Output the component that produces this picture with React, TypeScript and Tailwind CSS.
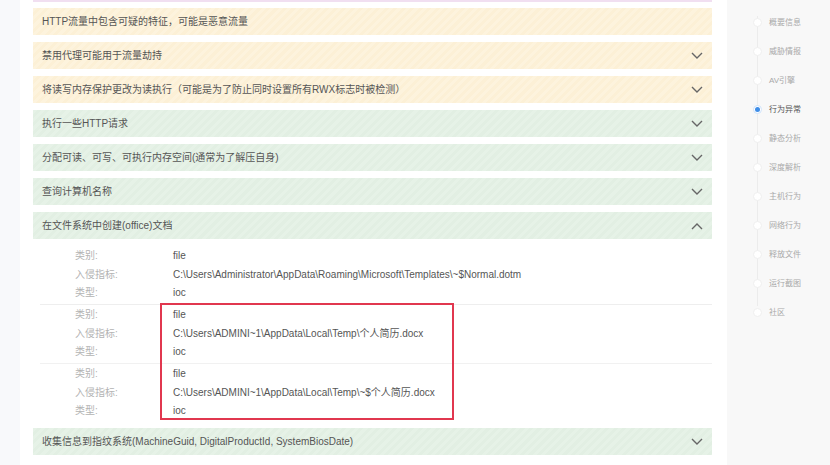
import React from "react";

const yellow =
  "bg-[repeating-linear-gradient(135deg,#fdf3dd_0px,#fdf3dd_3px,#fcf0d6_3px,#fcf0d6_6px)]";
const green =
  "bg-[repeating-linear-gradient(135deg,#e6f2e7_0px,#e6f2e7_3px,#e2efe3_3px,#e2efe3_6px)]";

function Chevron({ up }: { up?: boolean }) {
  return (
    <svg width="12" height="8" viewBox="0 0 12 8" className="shrink-0">
      <path
        d={up ? "M1 7 L6 2 L11 7" : "M1 1 L6 6 L11 1"}
        fill="none"
        stroke="#666"
        strokeWidth="1.4"
      />
    </svg>
  );
}

function Row({
  text,
  kind,
  chevron = "down",
}: {
  text: string;
  kind: "y" | "g";
  chevron?: "down" | "up" | "none";
}) {
  return (
    <div
      className={`h-[27px] flex items-center justify-between pl-[9px] pr-[9px] text-[10px] text-[#555] ${
        kind === "y" ? yellow : green
      }`}
    >
      <span>{text}</span>
      {chevron !== "none" && <Chevron up={chevron === "up"} />}
    </div>
  );
}

function Detail({ v }: { v: string }) {
  return (
    <div className="flex flex-col text-[10px]">
      {[
        ["类别", "file"],
        ["入侵指标", v],
        ["类型", "ioc"],
      ].map(([k, val]) => (
        <div key={k} className="h-[18.7px] flex items-center">
          <span className="w-[98px] text-[#b3b3b3]">{k}:</span>
          <span className="text-[#555]">{val}</span>
        </div>
      ))}
    </div>
  );
}

const nav = [
  "概要信息",
  "威胁情报",
  "AV引擎",
  "行为异常",
  "静态分析",
  "深度解析",
  "主机行为",
  "网络行为",
  "释放文件",
  "运行截图",
  "社区",
];

export default function App() {
  return (
    <div
      className="w-[830px] h-[465px] overflow-hidden flex bg-[#f8f8f8]"
      style={{ fontFamily: '"Liberation Sans", Arial, "Noto Sans CJK SC", sans-serif' }}
    >
      <div className="w-[20px] bg-[#f8f9fb]" />
      <div className="w-[707px] bg-white pl-[13px] pr-[15px] flex flex-col">
        <div className="h-[2px] bg-[#f1dff1]" />
        <div className="flex flex-col gap-[7px] mt-[6px]">
          <Row text="HTTP流量中包含可疑的特征，可能是恶意流量" kind="y" chevron="none" />
          <Row text="禁用代理可能用于流量劫持" kind="y" />
          <Row text="将读写内存保护更改为读执行（可能是为了防止同时设置所有RWX标志时被检测）" kind="y" />
          <Row text="执行一些HTTP请求" kind="g" />
          <Row text="分配可读、可写、可执行内存空间(通常为了解压自身)" kind="g" />
          <Row text="查询计算机名称" kind="g" />
          <Row text="在文件系统中创建(office)文档" kind="g" chevron="up" />
        </div>
        <div className="pl-[42px] pt-[7px] pb-[8px]">
          <div className="border-b border-[#eeeeee] -ml-[35px] pl-[35px] pb-[2px]">
            <Detail v="C:\Users\Administrator\AppData\Roaming\Microsoft\Templates\~$Normal.dotm" />
          </div>
          <div className="relative">
            <div className="absolute left-[85px] top-[-2px] w-[294px] h-[117px] border-2 border-[#e1374f]" />
            <div className="border-b border-[#f1f1f1] -ml-[35px] pl-[35px] pb-[2px]">
              <Detail v="C:\Users\ADMINI~1\AppData\Local\Temp\个人简历.docx" />
            </div>
            <div>
              <Detail v="C:\Users\ADMINI~1\AppData\Local\Temp\~$个人简历.docx" />
            </div>
          </div>
        </div>
        <Row text="收集信息到指纹系统(MachineGuid, DigitalProductId, SystemBiosDate)" kind="g" />
      </div>
      <div className="flex-1 pl-[26px] pt-[8px]">
        <div className="relative flex flex-col">
          <div className="absolute left-[4px] top-[8px] h-[290px] w-px bg-[#ececec]" />
          {nav.map((n, i) => (
            <div key={n} className="h-[29px] flex items-center gap-[7px] relative">
              {i === 3 ? (
                <span className="w-[9px] h-[9px] rounded-full bg-white border border-[#cfe3fb] flex items-center justify-center">
                  <span className="w-[5px] h-[5px] rounded-full bg-[#3f8ee8]" />
                </span>
              ) : (
                <span className="w-[9px] h-[9px] rounded-full bg-white border border-[#efefef]" />
              )}
              <span className={`text-[8px] ${i === 3 ? "text-[#555]" : "text-[#a9a9a9]"}`}>{n}</span>
            </div>
          ))}
        </div>
      </div>
    </div>
  );
}
